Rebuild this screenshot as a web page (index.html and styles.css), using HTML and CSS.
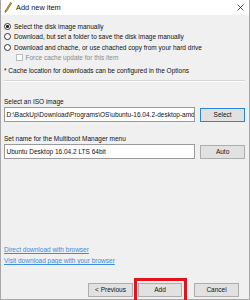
FILE: index.html
```html
<!DOCTYPE html>
<html>
<head>
<meta charset="utf-8">
<link rel="stylesheet" href="styles.css">
</head>
<body>
<div class="win">
  <div class="titlebar">
    <svg class="pencil" width="8" height="11" viewBox="0 0 8 11">
      <path d="M6.6 0.6 L7.6 1.2 L2.4 9.6 L1.1 10.4 L1.3 8.9 Z" fill="#f2c81b" stroke="#3a3000" stroke-width="0.6"/>
    </svg>
    <span class="title">Add new item</span>
    <svg class="close" width="7" height="7" viewBox="0 0 7 7">
      <path d="M0.5 0.5 L6.5 6.5 M6.5 0.5 L0.5 6.5" stroke="#222" stroke-width="0.8"/>
    </svg>
  </div>
  <div class="content">
    <div class="options">
      <div class="opt"><span class="radio on"></span><span>Select the disk image manually</span></div>
      <div class="opt"><span class="radio"></span><span>Download, but set a folder to save the disk image manually</span></div>
      <div class="opt"><span class="radio"></span><span>Download and chache, or use chached copy from your hard drive</span></div>
      <div class="chk"><span class="box"></span><span>Force cache update for this item</span></div>
    </div>
    <div class="note">* Cache location for downloads can be configured in the Options</div>
    <div class="sep"></div>
    <div class="label first">Select an ISO image</div>
    <div class="field">
      <div class="input">D:\BackUp\Download\Programs\OS\ubuntu-16.04.2-desktop-amd64.iso</div>
      <div class="btn focus">Select</div>
    </div>
    <div class="label">Set name for the Multiboot Manager menu</div>
    <div class="field">
      <div class="input">Ubuntu Desktop 16.04.2 LTS 64bit</div>
      <div class="btn">Auto</div>
    </div>
    <div class="links">
      <a class="link">Direct download with browser</a>
      <a class="link">Visit download page with your browser</a>
    </div>
    <div class="footer">
      <div class="btn prev">&lt; Previous</div>
      <div class="btn add">Add</div>
      <div class="btn cancel">Cancel</div>
      <div class="highlight"></div>
    </div>
  </div>
</div>
</body>
</html>
```

FILE: styles.css
```css
html, body {
  margin: 0;
  padding: 0;
}
body {
  width: 250px;
  height: 300px;
  overflow: hidden;
  font-family: "Liberation Sans", Arial, sans-serif;
  font-size: 6.5px;
  color: #111;
}
.win {
  box-sizing: border-box;
  width: 250px;
  height: 300px;
  background: #f0f0f0;
  border: 1px solid #a8a8a8;
  border-top: none;
  display: flex;
  flex-direction: column;
}
.titlebar {
  height: 15px;
  background: #fff;
  display: flex;
  align-items: center;
  position: relative;
}
.pencil {
  margin-left: 3px;
}
.title {
  margin-left: 4px;
  font-size: 7.4px;
  color: #111;
}
.close {
  margin-left: auto;
  margin-right: 5px;
}
.content {
  flex: 1;
  display: flex;
  flex-direction: column;
  padding: 6px 4px 0 2px;
}
.options {
  display: flex;
  flex-direction: column;
}
.opt {
  height: 10.5px;
  display: flex;
  align-items: center;
}
.radio {
  box-sizing: border-box;
  width: 7px;
  height: 7px;
  border-radius: 50%;
  border: 0.8px solid #333;
  background: #fff;
  margin: 0 3px 0 1px;
  position: relative;
  flex: none;
}
.radio.on::after {
  content: "";
  position: absolute;
  left: 1.4px;
  top: 1.4px;
  width: 2.6px;
  height: 2.6px;
  border-radius: 50%;
  background: #222;
}
.chk {
  height: 10px;
  display: flex;
  align-items: center;
  color: #8a8a8a;
  padding-left: 13px;
}
.box {
  box-sizing: border-box;
  width: 6.5px;
  height: 6.5px;
  border: 0.8px solid #bcbcbc;
  background: #fff;
  margin-right: 3px;
  flex: none;
}
.note {
  height: 10px;
  line-height: 10px;
  margin-top: 3.5px;
  padding-left: 1px;
}
.sep {
  height: 1px;
  background: #d6d6d6;
  border-bottom: 1px solid #fff;
  margin-top: 4px;
  margin-left: 1px;
}
.label {
  height: 10px;
  line-height: 10px;
  margin-top: 12px;
  padding-left: 1px;
}
.label.first {
  margin-top: 15px;
}
.field {
  display: flex;
  align-items: center;
  margin-left: 1px;
}
.input {
  box-sizing: border-box;
  width: 192px;
  height: 15px;
  line-height: 13px;
  border: 1px solid #9a9a9a;
  background: #fff;
  padding-left: 1.5px;
  white-space: nowrap;
  overflow: hidden;
}
.btn {
  box-sizing: border-box;
  width: 45px;
  height: 14px;
  line-height: 12px;
  text-align: center;
  background: #e1e1e1;
  border: 1px solid #adadad;
  margin-left: 5px;
}
.btn.focus {
  border-color: #2b86d8;
}
.links {
  display: flex;
  flex-direction: column;
  margin-top: 85px;
  padding-left: 1px;
}
.link {
  height: 11px;
  line-height: 11px;
  color: #3b8be0;
  text-decoration: underline;
  white-space: nowrap;
}
.footer {
  display: flex;
  margin-top: 17px;
  padding-left: 85px;
  position: relative;
}
.footer .btn {
  margin-left: 0;
}
.add {
  margin-left: 5px !important;
  width: 44px;
}
.cancel {
  margin-left: 12px !important;
}
.highlight {
  position: absolute;
  left: 131px;
  top: -5px;
  width: 53px;
  height: 27px;
  box-sizing: border-box;
  border: 3px solid #e3121d;
}
```
